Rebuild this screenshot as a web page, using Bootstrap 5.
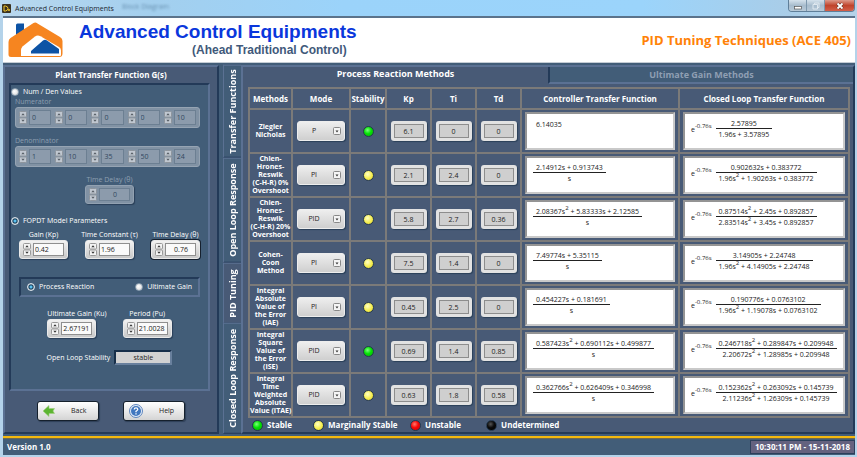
<!DOCTYPE html>
<html lang="en">
<head>
<meta charset="utf-8">
<meta name="viewport" content="width=device-width, initial-scale=1">
<title>Advanced Control Equipments</title>
<link href="https://cdn.jsdelivr.net/npm/bootstrap@5.3.0/dist/css/bootstrap.min.css" rel="stylesheet">
<style>
:root{--panel:#485a76;--base:#425d78;--dark:#233a58;--edge:#5b7193;--grid:#7b7a79;--ui:"Open Sans","Noto Sans",sans-serif}
body{font-family:var(--ui);font-size:7px;line-height:10px;color:#fff;background:#b4d3ea}
button,input,select{font:inherit}
.window-bar{height:16px;background:linear-gradient(90deg,#b9d8ef 0,#a3cfee 18%,#9bd3fa 40%,#9bd4fb 75%,#a9cde8 92%,#b5d3e9);color:#1c2630;padding-left:2px}
.ghost-text{color:#6992b2;filter:blur(1px);padding-top:2px}
.win-buttons{border:1px solid #5f7f99;border-top:0;border-radius:0 0 4px 4px;overflow:hidden;height:12px;margin-right:2px}
.win-buttons button{width:18px;border:0;border-right:1px solid #7d98ae;padding:0;background:linear-gradient(#d5e2ec,#a7bccd 50%,#b8cad8);line-height:1}
.win-buttons button:last-child{width:29px;border-right:0;background:linear-gradient(#dd9a8b,#c0442c 50%,#d4604a)}
.win-buttons svg,.brand svg,.tool-btn svg{display:block}
.win-buttons svg{margin:auto}
.frame{margin:0 2px 2px 3px;background:var(--base);border-top:2px solid #5b738b}
.brand{background:#fff;height:45px;border-bottom:1px solid #c4ccd4}
.brand h1{font:bold 19px/20px "Liberation Sans",sans-serif;color:#0a37dc}
.brand p{font:bold 12px/16px "Liberation Sans",sans-serif;color:#41597a;padding-right:10px}
.brand h2{font-size:13px;line-height:16px;font-weight:700;color:#ff8208}
.work{padding-top:2px}
.side{width:216px;background:var(--panel);border:2px solid var(--edge);border-right-color:var(--dark);border-bottom-color:var(--dark)}
.side-title{font-size:8px;line-height:12px;font-weight:700;padding:2px 0}
.well{background:var(--base);border:2px solid var(--dark);border-right-color:var(--edge);border-bottom-color:var(--edge)}
.source-well{margin:0 7px 0 4px}
.gap-small{margin-top:2px}
.gap-above{margin-top:12px}
.gap-wide{margin-top:18px}
.dim{color:#8d9fb0}
.pick{appearance:none;width:8px;height:8px;margin:0;border-radius:50%;background:radial-gradient(circle at 40% 40%,#fff,#d6d6d6);border:1px solid #8da0b2}
.pick:checked{border-color:#dfe6ec;background:radial-gradient(circle,#5cc0ee 0 1px,#123a58 2px,#e8eef2 4px)}
.spin{background:linear-gradient(#f2f2f2,#c9c9c9);border:1px solid #e9e9e9;border-radius:3px;box-shadow:1px 1px 1px #2b4059;padding:2px 3px;gap:2px}
.spin input{width:100%;min-width:0;height:13px;border:1px solid #8f8f8f;border-radius:0;padding:0 0 0 1px;background:#fafafa;color:#222}
.spin-w{width:49px}
.spin-focus{box-shadow:0 0 0 1px #16202e}
.arrows{width:8px;flex:none}
.spin.dimmed{background:#8192a4;border-color:#92a1b1}
.dimmed input{background:#8c9bac;border-color:#6c7f92;color:#33485e}
.dimmed .arrows{opacity:.55}
.array{background:#8192a4;border:1px solid #96a4b3;border-radius:3px;padding:2px 3px}
.array .spin{background:none;border:0;box-shadow:none;padding:0;flex:1}
.array .spin input{height:15px;padding-left:2px}
.choice{padding:3px 6px}
.stable-box{width:58px;height:15px;border:2px solid #172f4a;border-right-color:#69809d;border-bottom-color:#69809d;background:#d2d2d2;color:#222;text-align:center;padding:0}
.tools{padding:10px 0 11px 0}
.tool-btn{background:linear-gradient(#fff,#d4d4d4);border:1px solid #15202c;border-radius:3px;height:20px;min-width:62px;color:#222;padding:0 5px;box-shadow:1px 1px 1px #2e3f58}
.vtabs{width:18px;margin-left:4px}
.vtabs button{writing-mode:vertical-rl;transform:rotate(180deg);color:#fff;font-weight:700;font-size:9px;line-height:12px;border:1px solid var(--edge);border-top-color:var(--dark);border-left:0;border-bottom-color:var(--edge);background:var(--base);padding:0;flex:1 1 92px;min-height:0;white-space:nowrap}
.vtabs .tab-tall{flex-basis:104px}
.vtabs .tab-short{flex-basis:60px;background:var(--panel)}
.vtabs .tab-last{flex-basis:110px}
.main-pane{background:var(--panel);border:2px solid var(--edge);border-right-color:var(--dark);border-bottom-color:var(--dark);min-width:0}
.top-tabs button{background:none;border:0;padding:0 0 4px;height:17px;color:#fff;font-weight:700;font-size:9px;line-height:12px}
.top-tabs button+button{padding:0;background:var(--base);color:#8f9fb3;border-left:2px solid var(--dark);border-bottom:2px solid var(--edge)}
.table-wrap{padding:3px 3px 0 5px}
.methods{table-layout:fixed;width:100%;border-collapse:collapse}
.methods th,.methods td{border:2px solid var(--grid);padding:0;text-align:center;vertical-align:middle}
.methods thead th{height:21px;white-space:nowrap;font-size:8px;line-height:10px}
.methods tbody tr{height:44px}
.methods tbody th{line-height:8px;white-space:nowrap}
.c1{width:43px}.c2{width:58px}.c3{width:36px}.c4{width:45px}.c7{width:158px}
.mode{appearance:none;width:48px;height:20px;border:1px solid #ededed;border-radius:3px;color:#222;padding:0 14px 0 0;text-align:center;text-align-last:center;box-shadow:1px 1px 1px #2b4059;background:url("data:image/svg+xml,%3Csvg xmlns='http://www.w3.org/2000/svg' width='8' height='8'%3E%3Crect x='.5' y='.5' width='7' height='7' rx='1' fill='%23f4f4f4' stroke='%23888'/%3E%3Cpath d='M2.500 3.500h3L4 5.500z' fill='%23333'/%3E%3C/svg%3E") no-repeat right 3px center,linear-gradient(#eee,#cfcfcf)}
.read{width:36px;height:20px;border:3px solid #e2e2e2;border-radius:3px;background:#cfcfcf;outline:1px solid #8d8d8d;outline-offset:-4px;color:#222;text-align:center;padding:0;box-shadow:1px 1px 1px #2b4059}
.led{display:inline-block;width:11px;height:11px;border-radius:50%;border:1px solid #24384f;vertical-align:middle}
.led-green{background:radial-gradient(circle at 40% 35%,#7dff7d,#05e205 45%,#04b004)}
.led-yellow{background:radial-gradient(circle at 40% 35%,#ffffc4,#f6ee4e 55%,#cfc53a)}
.led-red{background:radial-gradient(circle at 40% 35%,#ff7a6c,#f60808 45%,#c00)}
.led-black{background:radial-gradient(circle at 40% 35%,#555,#0a0a0a 45%,#000)}
.formula{background:#fff;color:#222;margin:2px 3px;height:38px;border:2px solid #949494;border-right-color:#c9c9c9;border-bottom-color:#c9c9c9;padding:0 0 3px 6px;white-space:nowrap}
.formula sup{font-size:6px;line-height:0;top:-4px}
.frac>span{padding:0 3px;display:block;line-height:8px}
.frac>span+span{border-top:1px solid #222;padding-top:2px}
.single{padding:0 3px 9px}
.legend{font-size:8px;font-weight:700;line-height:14px;padding-left:9px}
.legend .led{margin-right:2px}
.legend-a{width:61px}.legend-b{width:97px}.legend-c{width:76px}
.gold{height:3px;background:#f4b90e;border-bottom:1px solid #6d6b4e;margin-top:2px}
.clock{background:#64627f;border:1px solid #2b3f5b;padding:0 4px;line-height:12px}
.foot{font-weight:700;font-size:8px;height:16px}
</style>
</head>
<body>
<div class="d-flex flex-column min-vh-100">
<header class="window-bar d-flex align-items-start">
  <svg class="mt-1" width="9" height="9" viewBox="0 0 9 9" aria-hidden="true"><rect width="9" height="9" rx="1" fill="#3b3320"/><path d="M2 2v5h1.500Q6 6.500 6 4.500T3.500 2zM6 6h2M7 5v2" fill="none" stroke="#f2c62c"/></svg>
  <span class="ms-1 mt-1">Advanced Control Equipments</span>
  <span class="ghost-text ms-2" aria-hidden="true">Block Diagram</span>
  <div class="win-buttons d-flex ms-auto">
    <button type="button" aria-label="Minimize"><svg width="10" height="8" viewBox="0 0 10 8"><rect x="1.500" y="4.500" width="7" height="2.500" fill="#fff" stroke="#555" stroke-width=".7"/></svg></button>
    <button type="button" aria-label="Restore"><svg width="10" height="8" viewBox="0 0 10 8"><path d="M3.500 2.500V1h4.500v4.500H6.500M2 2.500h4.500V7H2z" fill="none" stroke="#dfe8ef"/></svg></button>
    <button type="button" aria-label="Close"><svg width="10" height="8" viewBox="0 0 10 8"><path d="M2.500 1.500l5 5m0-5l-5 5" stroke="#5a2a22" stroke-width="3"/><path d="M2.500 1.500l5 5m0-5l-5 5" stroke="#fff" stroke-width="1.800"/></svg></button>
  </div>
</header>
<div class="frame flex-grow-1 d-flex flex-column">
  <div class="brand d-flex align-items-center px-1">
    <svg width="56" height="36" viewBox="0 0 56 36" aria-hidden="true"><path d="M9 3q0-1.500 1.500-1.500H17V8L9 14z" fill="#0d53a5"/><path d="M26.500 1Q28.500 0 30.500 1.500L53 15q2.500 1.500 2.500 4V31.500q0 3.500-3.500 3.500H4q-2.500 0-2.500-2.500V20q0-2.500 2-4z" fill="#f68520"/><path d="M14 34V28q0-2 1.500-3.500L28 14.500q2.500-2 5.500-.3L52 25q2 1.300 2 3.500v4.500q0 1-1 1z" fill="#fff"/><path d="M24 29L36 18.500q2-1.500 4 0L52 27V31.500H24z" fill="#0d53a5"/></svg>
    <div class="ps-3">
      <h1 class="m-0">Advanced Control Equipments</h1>
      <p class="m-0 text-end">(Ahead Traditional Control)</p>
    </div>
    <h2 class="ms-auto mb-0">PID Tuning Techniques (ACE 405)</h2>
  </div>
  <div class="work d-flex flex-grow-1">
    <section class="side d-flex flex-column flex-shrink-0">
      <h3 class="side-title text-center mb-0">Plant Transfer Function G(s)</h3>
      <div class="well source-well flex-grow-1 d-flex flex-column">
        <div class="d-flex align-items-center gap-1 gap-small"><input class="pick" type="radio" name="source" id="src-nd"><label for="src-nd">Num / Den Values</label></div>
        <div class="dim ms-1">Numerator</div>
        <div class="array dimmed d-flex gap-1 ms-1 me-2" id="numerator"></div>
        <div class="dim ms-1 mt-2">Denominator</div>
        <div class="array dimmed d-flex gap-1 ms-1 me-2" id="denominator"></div>
        <div class="mt-2 d-flex flex-column align-items-center"><label class="dim" for="td0">Time Delay (θ)</label><div class="spin spin-w dimmed d-flex align-items-center"><svg class="arrows" height="13" viewBox="0 0 8 13"><use href="#ud"/></svg><input class="text-center" id="td0" value="0" disabled></div></div>
        <div class="d-flex align-items-center gap-1 gap-above"><input class="pick" type="radio" name="source" id="src-fo" checked><label for="src-fo">FOPDT Model Parameters</label></div>
        <div class="d-flex justify-content-between ps-2 pe-2 mt-1">
          <div class="d-flex flex-column align-items-center"><label for="gk">Gain (Kp)</label><div class="spin spin-w d-flex align-items-center"><svg class="arrows" height="13" viewBox="0 0 8 13"><use href="#ud"/></svg><input id="gk" value="0.42"></div></div>
          <div class="d-flex flex-column align-items-center"><label for="tc">Time Constant (τ)</label><div class="spin spin-w d-flex align-items-center"><svg class="arrows" height="13" viewBox="0 0 8 13"><use href="#ud"/></svg><input id="tc" value="1.96"></div></div>
          <div class="d-flex flex-column align-items-center"><label for="td">Time Delay (θ)</label><div class="spin spin-w spin-focus d-flex align-items-center"><svg class="arrows" height="13" viewBox="0 0 8 13"><use href="#ud"/></svg><input class="text-center" id="td" value="0.76"></div></div>
        </div>
        <div class="well choice d-flex justify-content-between align-items-center gap-wide mx-2">
          <span class="d-flex align-items-center gap-1"><input class="pick" type="radio" name="tune" id="pr" checked><label for="pr">Process Reaction</label></span>
          <span class="d-flex align-items-center gap-1"><input class="pick" type="radio" name="tune" id="ug"><label for="ug">Ultimate Gain</label></span>
        </div>
        <div class="d-flex justify-content-center gap-3 gap-above">
          <div class="d-flex flex-column align-items-start"><label for="ku">Ultimate Gain (Ku)</label><div class="spin spin-w d-flex align-items-center"><svg class="arrows" height="13" viewBox="0 0 8 13"><use href="#ud"/></svg><input id="ku" value="2.67191"></div></div>
          <div class="d-flex flex-column align-items-center"><label for="pu">Period (Pu)</label><div class="spin spin-w d-flex align-items-center"><svg class="arrows" height="13" viewBox="0 0 8 13"><use href="#ud"/></svg><input id="pu" value="21.0028"></div></div>
        </div>
        <div class="d-flex align-items-center justify-content-center gap-1 gap-above"><label for="st">Open Loop Stability</label><input class="stable-box" id="st" value="stable" readonly></div>
      </div>
      <div class="tools d-flex justify-content-center gap-4">
        <button class="tool-btn d-flex align-items-center gap-3" type="button"><svg width="12" height="12" viewBox="0 0 12 12"><path d="M0 6L6 .5V3.500h5.500L10 6l1.500 2.500H6v3z" fill="#5cb531" stroke="#9fcf80" stroke-width=".6"/></svg>Back</button>
        <button class="tool-btn d-flex align-items-center gap-3" type="button"><svg width="14" height="14" viewBox="0 0 14 14"><circle cx="7" cy="7" r="6.500" fill="#e5edf8" stroke="#5f86bd"/><circle cx="7" cy="7" r="5" fill="#4177bf"/><path d="M5.200 5.500Q5.300 3.800 7 3.800T8.800 5.300Q8.800 6.300 7 7.300V8.300M7 9.300v1.200" fill="none" stroke="#fff" stroke-width="1.300"/></svg>Help</button>
      </div>
    </section>
    <nav class="vtabs d-flex flex-column flex-shrink-0" aria-label="Views">
      <button type="button">Transfer Functions</button><button class="tab-tall" type="button">Open Loop Response</button><button class="tab-short" type="button">PID Tuning</button><button class="tab-last" type="button">Closed Loop Response</button>
    </nav>
    <main class="main-pane flex-grow-1 d-flex flex-column">
      <div class="top-tabs d-flex"><button class="w-50" type="button">Process Reaction Methods</button><button class="w-50" type="button">Ultimate Gain Methods</button></div>
      <div class="table-wrap">
        <table class="methods"><colgroup><col class="c1"><col class="c2"><col class="c3"><col class="c4"><col class="c4"><col class="c4"><col class="c7"><col></colgroup>
          <thead><tr><th>Methods</th><th>Mode</th><th>Stability</th><th>Kp</th><th>Ti</th><th>Td</th><th>Controller Transfer Function</th><th>Closed Loop Transfer Function</th></tr></thead>
          <tbody id="rows"></tbody>
        </table>
      </div>
      <div class="legend d-flex">
        <span class="legend-a"><i class="led led-green"></i> Stable</span><span class="legend-b"><i class="led led-yellow"></i> Marginally Stable</span><span class="legend-c"><i class="led led-red"></i> Unstable</span><span><i class="led led-black"></i> Undetermined</span>
      </div>
    </main>
  </div>
  <div class="gold"></div>
  <footer class="foot d-flex align-items-center ps-1"><span>Version 1.0</span><span class="clock ms-auto">10:30:11 PM - 15-11-2018</span></footer>
</div>
</div>
<svg class="d-none" aria-hidden="true"><symbol id="ud" viewBox="0 0 8 13"><rect x=".5" y=".5" width="7" height="5.500" rx="1" fill="#f4f4f4" stroke="#999"/><rect x=".5" y="7" width="7" height="5.500" rx="1" fill="#f4f4f4" stroke="#999"/><path d="M2.300 4.300L4 2.300l1.700 2zM2.300 8.700L4 10.700l1.700-2z" fill="#333"/></symbol></svg>
<script src="https://cdn.jsdelivr.net/npm/bootstrap@5.3.0/dist/js/bootstrap.bundle.min.js"></script>
<script>
const methods = [
 ['Ziegler<br>Nicholas','P','green','6.1','0','0',['6.14035'],['2.57895','1.96s + 3.57895']],
 ['Chien-<br>Hrones-<br>Reswik<br>(C-H-R) 0%<br>Overshoot','PI','yellow','2.1','2.4','0',['2.14912s + 0.913743','s'],['0.902632s + 0.383772','1.96s^ + 1.90263s + 0.383772']],
 ['Chien-<br>Hrones-<br>Reswik<br>(C-H-R) 20%<br>Overshoot','PID','yellow','5.8','2.7','0.36',['2.08367s^ + 5.83333s + 2.12585','s'],['0.87514s^ + 2.45s + 0.892857','2.83514s^ + 3.45s + 0.892857']],
 ['Cohen-<br>Coon<br>Method','PI','yellow','7.5','1.4','0',['7.49774s + 5.35115','s'],['3.14905s + 2.24748','1.96s^ + 4.14905s + 2.24748']],
 ['Integral<br>Absolute<br>Value of<br>the Error<br>(IAE)','PI','yellow','0.45','2.5','0',['0.454227s + 0.181691','s'],['0.190776s + 0.0763102','1.96s^ + 1.19078s + 0.0763102']],
 ['Integral<br>Square<br>Value of<br>the Error<br>(ISE)','PID','green','0.69','1.4','0.85',['0.587423s^ + 0.690112s + 0.499877','s'],['0.246718s^ + 0.289847s + 0.209948','2.20672s^ + 1.28985s + 0.209948']],
 ['Integral<br>Time<br>Weighted<br>Absolute<br>Value (ITAE)','PID','yellow','0.63','1.8','0.58',['0.362766s^ + 0.626409s + 0.346998','s'],['0.152362s^ + 0.263092s + 0.145739','2.11236s^ + 1.26309s + 0.145739']]
];
const pow = t => t.replace('^', '<sup>2</sup>');
const frac = f => f.length < 2 ? `<span class="single">${f[0]}</span>` : `<span class="frac text-center"><span>${pow(f[0])}</span><span>${pow(f[1])}</span></span>`;
document.getElementById('rows').innerHTML = methods.map(([name, mode, led, kp, ti, td, ctf, cl], i) => `<tr><th scope="row">${name}</th>
 <td><select class="mode" aria-label="Mode ${i + 1}">${['P','PI','PID'].map(m => `<option${m === mode ? ' selected' : ''}>${m}</option>`).join('')}</select></td>
 <td><span class="led led-${led}"></span></td>
 ${[kp, ti, td].map((v, k) => `<td><input class="read" readonly aria-label="${['Kp','Ti','Td'][k]} ${i + 1}" value="${v}"></td>`).join('')}
 <td><div class="formula d-flex align-items-center">${frac(ctf)}</div></td>
 <td><div class="formula d-flex align-items-center"><span class="me-1">e<sup>-0.76s</sup></span>${frac(cl)}</div></td></tr>`).join('');
const arrows = '<svg class="arrows" height="13" viewBox="0 0 8 13"><use href="#ud"/></svg>';
for (const [id, vals] of [['numerator',[0,0,0,0,10]],['denominator',[1,10,35,50,24]]])
 document.getElementById(id).innerHTML = vals.map((v, i) => `<div class="spin d-flex align-items-center">${arrows}<input disabled aria-label="${id} ${i + 1}" value="${v}"></div>`).join('');
</script>
</body>
</html>
